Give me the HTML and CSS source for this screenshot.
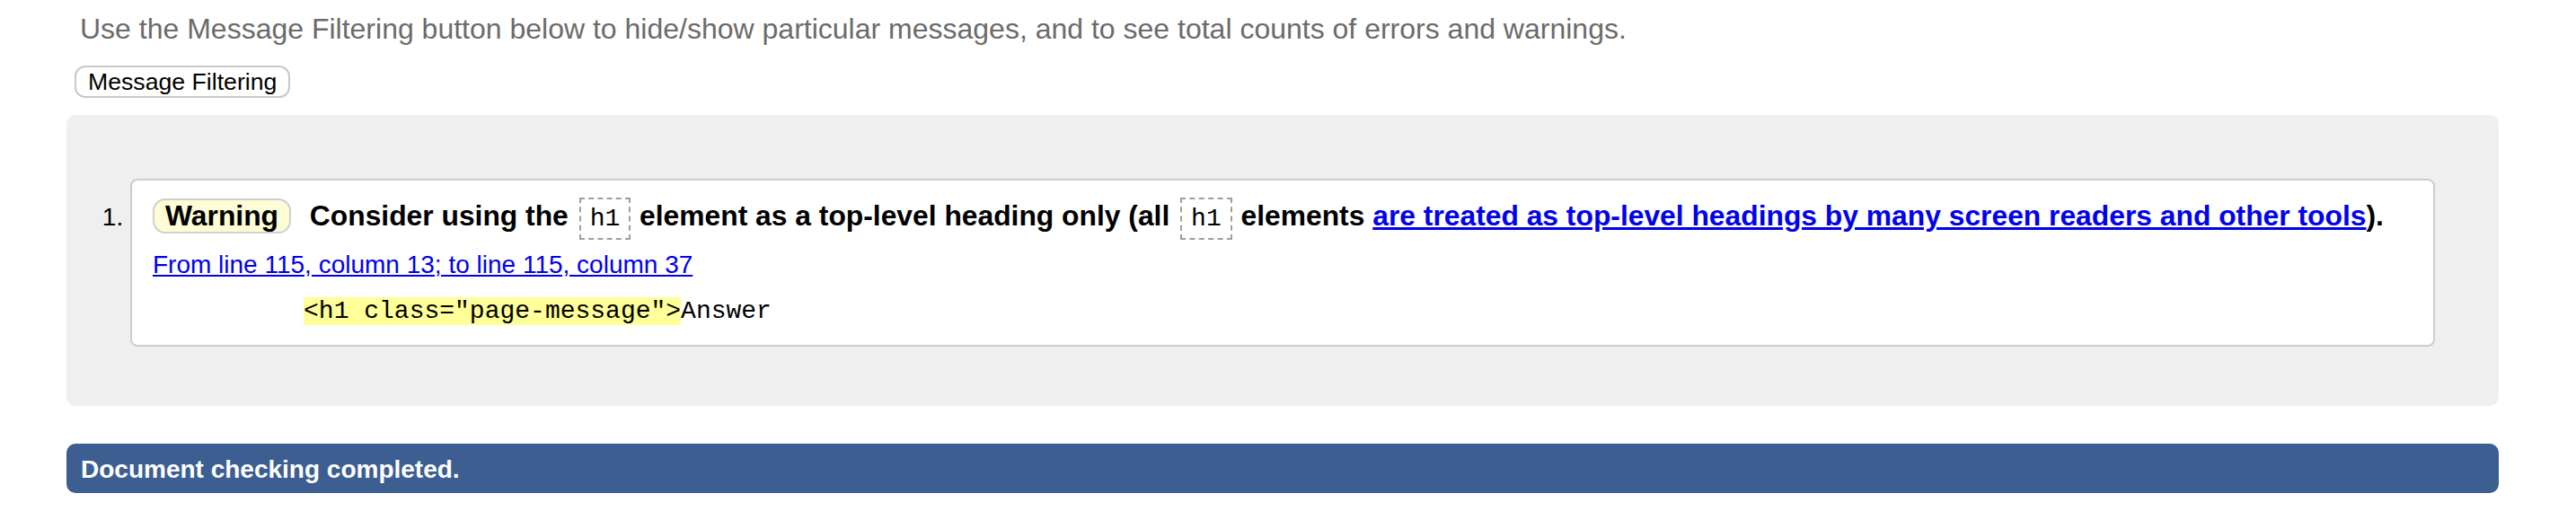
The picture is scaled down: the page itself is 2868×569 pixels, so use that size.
FILE: index.html
```html
<!DOCTYPE html>
<html lang="en">
<head>
<meta charset="utf-8">
<title>Validation results</title>
<link rel="stylesheet" href="styles.css">
</head>
<body>
<div class="page">
  <p class="intro">Use the Message Filtering button below to hide/show particular messages, and to see total counts of errors and warnings.</p>
  <button class="filter-btn" type="button">Message Filtering</button>
  <div class="results">
    <ol class="messages">
      <li class="warning">
        <p class="msg"><strong class="badge">Warning</strong> <span class="msg-text">Consider using the <code class="tag">h1</code> element as a top-level heading only (all <code class="tag">h1</code> elements <a href="#">are treated as top-level headings by many screen readers and other tools</a>).</span></p>
        <p class="location"><a href="#">From line 115, column 13; to line 115, column 37</a></p>
        <p class="extract"><code>          <b>&lt;h1 class="page-message"&gt;</b>Answer</code></p>
      </li>
    </ol>
  </div>
  <p class="done">Document checking completed.</p>
</div>
</body>
</html>
```

FILE: styles.css
```css
html, body {
  margin: 0;
  padding: 0;
  background: #ffffff;
}

body {
  font-family: "Liberation Sans", Arial, Helvetica, sans-serif;
  font-size: 28px;
  line-height: 32px;
  color: #000;
}

.page {
  margin-left: 74px;
  width: 2708px;
  padding-top: 14px;
}

.intro {
  margin: 0 0 22px 15px;
  font-size: 32px;
  line-height: 37px;
  color: #6b6b6b;
}

.filter-btn {
  display: block;
  margin: 0 0 19px 9px;
  padding: 1px 13px;
  font-family: "Liberation Sans", Arial, Helvetica, sans-serif;
  font-size: 26.67px;
  line-height: 30px;
  color: #000;
  background: #fff;
  border: 2px solid #c8c8c8;
  border-radius: 12px;
}

.results {
  background: #efefef;
  border-radius: 10px;
  padding: 71px 71px 66px 71px;
}

.messages {
  margin: 0;
  padding: 0;
  list-style: decimal outside;
}

.warning {
  background: #fff;
  border: 2px solid #cccccc;
  border-radius: 8px;
  padding: 20px 23px 21px 23px;
}

.msg {
  margin: 0;
  font-weight: bold;
  font-size: 31.8px;
  line-height: 36px;
}

.badge {
  display: inline-block;
  padding: 0 12px;
  margin-right: 12px;
  line-height: 35px;
  background: #fdfcd4;
  border: 2px solid #cfcfcf;
  border-radius: 14px;
}

.tag {
  font-family: "Liberation Mono", "Courier New", monospace;
  font-weight: normal;
  font-size: 28px;
  line-height: 32px;
  padding: 6px 10px;
  margin: 0 1px 0 3px;
  border: 2px dashed #9e9e9e;
}

.msg a {
  color: #0000ee;
  text-decoration: underline;
}

.location {
  margin: 19px 0 0 0;
}

.location a {
  color: #0000ee;
  text-decoration: underline;
}

.extract {
  margin: 18px 0 0 0;
}

.extract code {
  font-family: "Liberation Mono", "Courier New", monospace;
  font-size: 28px;
  line-height: 32px;
  white-space: pre;
}

.extract b {
  font-weight: normal;
  background: #ffff99;
}

.done {
  margin: 42px 0 0 0;
  padding: 13px 16px 10px 16px;
  background: #3c5e91;
  color: #fff;
  font-weight: bold;
  border-radius: 10px;
}
```
